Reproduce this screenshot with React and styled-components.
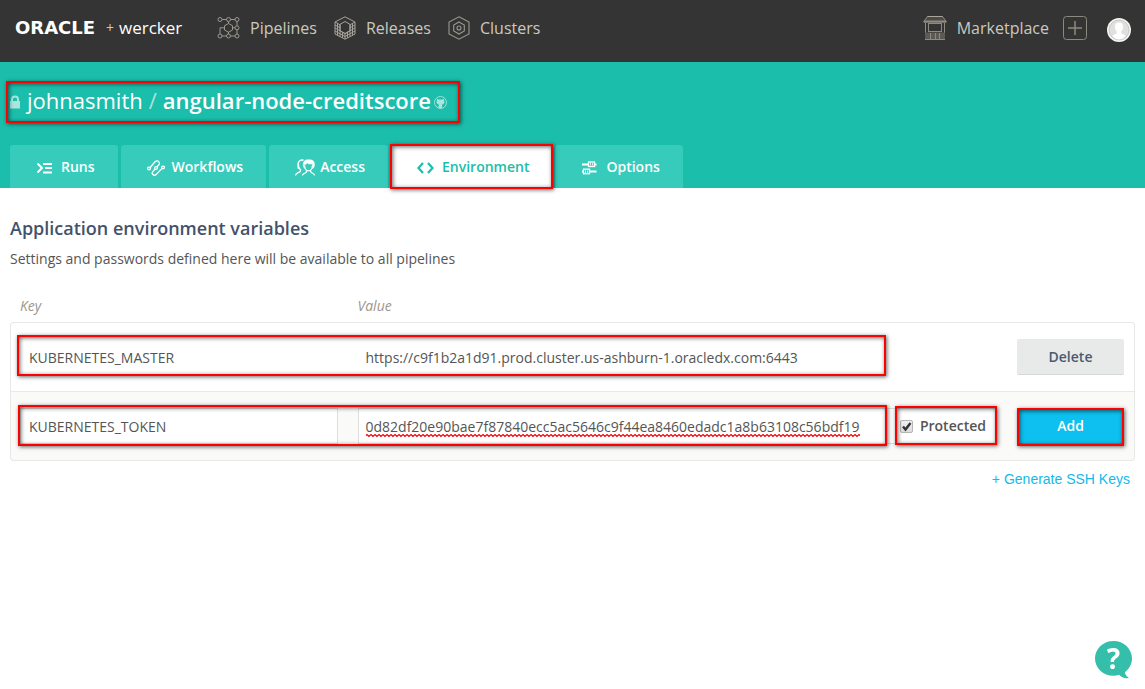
import React, { useState } from "react";
import styled, { createGlobalStyle, css } from "styled-components";

const GlobalStyle = createGlobalStyle`
  *, *::before, *::after { box-sizing: border-box; }
  body {
    margin: 0;
    background: #fff;
    color: #555;
    font-family: "Open Sans", "Noto Sans", sans-serif;
    font-size: 14px;
    line-height: 20px;
  }
  a { color: inherit; text-decoration: none; }
  button, input { font: inherit; color: inherit; }
  svg { display: block; flex: none; }
`;

/* Red call-out frame laid over the part it surrounds */
const Callout = styled.span`
  position: absolute;
  inset: ${(p) => p.$inset};
  border: 2px solid #f00;
  box-shadow: 1px 1px 4px rgba(0, 0, 0, 0.6), inset 1px 1px 4px rgba(0, 0, 0, 0.6);
  pointer-events: none;
  z-index: 2;
`;

const TopBar = styled.header`
  display: flex;
  align-items: center;
  height: 62px;
  padding: 0 14px 6px 15px;
  background: #333433;
  color: #cbc8c1;
  font-size: 16px;
  line-height: 24px;
`;

const Brand = styled.a`
  display: flex;
  align-items: center;
  gap: 5px;
  width: 202px;
  color: #fff;
  font-size: 17px;
`;

const Oracle = styled.span`
  width: 86px;
  font-family: "DejaVu Sans", sans-serif;
  font-weight: 700;
  font-size: 18px;
`;

const Plus = styled.span`
  font-size: 14px;
  color: #cbc8c1;
`;

const Nav = styled.nav`
  display: flex;
  gap: 17px;
`;

const NavLink = styled.a`
  display: flex;
  align-items: center;
  gap: 10px;
`;

const Tools = styled.div`
  display: flex;
  align-items: center;
  gap: 14px;
  margin-left: auto;
`;

const IconButton = styled.button`
  padding: 0;
  border: 0;
  background: none;
  cursor: pointer;
`;

const Account = styled(IconButton)`
  margin: 4px 0 0 6px;
`;

const Banner = styled.section`
  padding: 23px 10px 0;
  background: #1bbdab;
  color: #fff;
`;

const Title = styled.h1`
  position: relative;
  display: flex;
  align-items: center;
  width: fit-content;
  margin: 0 0 30px;
  font-size: 22px;
  line-height: 30px;
  font-weight: 400;
`;

const Owner = styled.a`
  margin-left: 7px;
`;

const Slash = styled.span`
  margin: 0 6px;
  opacity: 0.6;
`;

const Repo = styled.a`
  margin-right: 3px;
  font-weight: 600;
`;

const Tabs = styled.nav`
  display: flex;
  gap: 3px;
`;

const Tab = styled.a`
  position: relative;
  display: flex;
  align-items: center;
  height: 43px;
  padding: 0 23px 0 26px;
  border-radius: 3px 3px 0 0;
  background: #37cbbb;
  font-weight: 600;
  ${(p) => p.$active && css`
    background: #fff;
    color: #1bbdab;
  `}
`;

const TabIcon = styled.span`
  width: 25px;
  padding-top: 2px;
`;

const Main = styled.main`
  padding: 28px 10px;
`;

const Heading = styled.h2`
  margin: 0 0 8px;
  color: #43526a;
  font-size: 18px;
  line-height: 24px;
  font-weight: 600;
`;

const Intro = styled.p`
  margin: 0 0 24px;
  line-height: 22px;
`;

const VariableTable = styled.table`
  width: 100%;
  table-layout: fixed;
  border-collapse: separate;
  border-spacing: 0;
`;

const HeadCell = styled.th`
  width: ${(p) => p.$width || "auto"};
  padding: 0 10px 4px;
  color: #9a978f;
  font-weight: 400;
  font-style: italic;
  line-height: 24px;
  text-align: left;
`;

const Cell = styled.td`
  padding: 16px 10px;
  border-top: 1px solid #e8e8e7;
  vertical-align: middle;
  &:first-child { border-left: 1px solid #e8e8e7; padding-left: 9px; }
  &:last-child { border-right: 1px solid #e8e8e7; }
`;

const Row = styled.tr`
  position: relative;
  background: ${(p) => (p.$draft ? "#fafaf9" : "#fff")};
  &:first-child ${Cell}:first-child { border-top-left-radius: 4px; }
  &:first-child ${Cell}:last-child { border-top-right-radius: 4px; }
  &:last-child ${Cell} { border-bottom: 1px solid #e8e8e7; }
  &:last-child ${Cell}:first-child { border-bottom-left-radius: 4px; }
  &:last-child ${Cell}:last-child { border-bottom-right-radius: 4px; }
`;

const Field = styled.div`
  display: flex;
  align-items: center;
  height: 36px;
  border: 1px solid ${(p) => (p.$plain ? "transparent" : "#dededd")};
  background: #fff;
`;

const TextInput = styled.input`
  flex: 1;
  min-width: 0;
  height: 34px;
  padding: 0 ${(p) => (p.$wide ? "7px" : "8px")};
  border: 0;
  outline: 0;
  background: transparent;
`;

const Marked = styled.span`
  position: relative;
  display: flex;
  flex: 1;
  min-width: 0;
`;

const Squiggle = styled.svg`
  position: absolute;
  left: 7px;
  bottom: 6px;
  height: 3px;
  pointer-events: none;
`;

const Protect = styled.label`
  position: relative;
  display: flex;
  align-items: center;
  gap: 7px;
  height: 34px;
  padding: 0 10px 0 4px;
  font-weight: 600;
`;

const CheckBox = styled.input`
  appearance: none;
  width: 13px;
  height: 13px;
  margin: 0;
  border: 1px solid #b5b5b5;
  border-radius: 2px;
  background: linear-gradient(#f0f0f0, #dcdcdc);
`;

const CheckSlot = styled.span`
  position: relative;
  display: flex;
  svg { position: absolute; inset: 0; pointer-events: none; }
`;

const Button = styled.button`
  position: relative;
  display: block;
  width: 100%;
  height: 36px;
  padding: 0;
  border: 0;
  border-bottom: 1px solid ${(p) => (p.$primary ? "#0aaad8" : "#d5d6d6")};
  border-radius: 2px;
  background: ${(p) => (p.$primary ? "#0dc0ef" : "#e8eaea")};
  color: ${(p) => (p.$primary ? "#fff" : "#4b5a70")};
  font-weight: 600;
  cursor: pointer;
`;

const Footer = styled.div`
  display: flex;
  justify-content: flex-end;
  padding: 8px 5px;
`;

const KeyLink = styled.a`
  color: #14b9ea;
  font-family: "Liberation Sans", Arial, sans-serif;
`;

const Help = styled.button`
  position: fixed;
  right: 13px;
  bottom: 10px;
  width: 37px;
  height: 38px;
  padding: 0;
  border: 0;
  background: none;
  color: #fff;
  font-size: 28px;
  line-height: 34px;
  font-family: "Noto Sans", sans-serif;
  font-weight: 700;
  cursor: pointer;
  svg { position: absolute; inset: 0; }
  span { position: relative; display: block; height: 38px; }
`;

const PipelinesIcon = () => (
  <svg width="23" height="24" viewBox="0 0 23 24" fill="none" stroke="#9b9890" strokeWidth="1">
    <circle cx="3" cy="3.5" r="2" /><circle cx="11.5" cy="3.5" r="2" /><circle cx="20" cy="3.5" r="2" />
    <circle cx="3" cy="20" r="2" /><circle cx="11.5" cy="20" r="2" /><circle cx="20" cy="20" r="2" />
    <circle cx="20" cy="11.8" r="2" />
    <path d="M5 3.5h4.5M13.5 3.5H18M5 20h4.5M13.5 20H18M20 5.5v4.3M20 13.8V18M11.5 5.5v2M11.5 16v2M3 18v-6.2h4M16 11.8h2" />
    <path d="M11.5 7.5l4 2.2v4.3l-4 2.2-4-2.2V9.7z" />
  </svg>
);

const ReleasesIcon = () => (
  <svg width="22" height="24" viewBox="0 0 22 24" fill="none" stroke="#a5a29a" strokeWidth="1">
    <path d="M11 .8l10 5.2v12l-10 5.200L1 18V6z" />
    <path d="M11 5.500l5 2.800v6.500l-5 2.800-5-2.800V8.300z" />
    <path d="M1 6l5 2.800M21 6l-5 2.800M1 9l5 2.800M21 9l-5 2.800M1 12l10 5.600L21 12M1 15l10 5.500L21 15" />
    <path d="M3.500 7.400v12M6 8.800v12M8.500 16.200v5.600M11 17.600v5.400M13.500 16.200v5.600M16 8.800v12M18.500 7.400v12" />
  </svg>
);

const ClustersIcon = () => (
  <svg width="22" height="24" viewBox="0 0 22 24" fill="none" stroke="#9b9890" strokeWidth="1.1">
    <path d="M11 .8l10 5.3v11.8l-10 5.3-10-5.3V6.1z" />
    <path d="M11 6l5.3 3v6L11 18l-5.3-3V9z" />
    <circle cx="11" cy="12" r="2" />
  </svg>
);

const MarketIcon = () => (
  <svg width="24" height="26" viewBox="0 0 24 26" fill="none" stroke="#8f8a81" strokeWidth="1">
    <path d="M4.500 1.500h15l4 5.500H.5z" fill="#4c4a46" />
    <path d="M4.500 1.500h15" stroke="#aaa69d" />
    <path d="M1 6.500h22" strokeWidth="2" />
    <path d="M2.500 8v17M5.500 8v9M18.500 8v9M21.500 8v17" />
    <path d="M5.500 8.500h13M5.500 16.500h13" />
    <path d="M2 17.500h20v7H2z" fill="#5d5a54" stroke="none" />
    <path d="M2 24.500h20M7.500 18v7M12.500 18v7M16.500 18v7" />
  </svg>
);

const AddIcon = () => (
  <svg width="24" height="24" viewBox="0 0 24 24" fill="none" stroke="#8d897f">
    <rect x=".5" y=".5" width="23" height="23" rx="3" />
    <path d="M5 12h14M12 5v14" strokeWidth="1.5" />
  </svg>
);

const AvatarIcon = () => (
  <svg width="24" height="24" viewBox="0 0 24 24">
    <circle cx="12" cy="12" r="12" fill="#f4f4f3" />
    <circle cx="12" cy="12" r="10" fill="#e0e0dd" stroke="#b9b9b6" strokeWidth=".7" />
    <path d="M12 4.500c2.800 0 4.300 2 4.100 4.700-.1 1.800-.8 3.200-1.800 4.100v2.200c1.500.8 3.500 1.200 4.400 2.700A9.500 9.500 0 0 1 12 21.500a9.500 9.500 0 0 1-6.700-3.300c.9-1.500 2.900-1.900 4.400-2.700v-2.200c-1-.9-1.700-2.300-1.800-4.100C7.700 6.500 9.200 4.500 12 4.500z" fill="#fff" />
  </svg>
);

const LockIcon = () => (
  <svg width="10" height="18" viewBox="0 -4 10 18" fill="#a8e5dd">
    <path d="M0 6h1V4.500a4 4 0 0 1 8 0V6h1v7.500H0zM3 6h4V4.500a2 2 0 0 0-4 0z" />
  </svg>
);

const GithubIcon = () => (
  <svg width="13" height="17" viewBox="0 -4 13 17">
    <circle cx="6.500" cy="6.500" r="6" fill="none" stroke="#a8e5dd" strokeWidth=".9" />
    <path d="M3.200 2.800l1.500.8c1.100-.3 2.500-.3 3.600 0l1.500-.8c.3.600.3 1.200.2 1.700.9 1.500.5 3.800-2.200 4.200.3.400.3.900.3 1.500v2H4.900v-1.400c-1 .1-1.500-.2-1.900-1 .7.100 1 .4 1.900.2 0-.5.100-.9.300-1.300C2.500 8.300 2.100 6 3 4.500c-.1-.5-.1-1.100.2-1.700z" fill="#a8e5dd" />
  </svg>
);

const RunsIcon = () => (
  <svg width="17" height="12" viewBox="-1 0 17 12" fill="none" stroke="#fff" strokeWidth="2">
    <path d="M.5 1.500L5 6 .5 10.500M6 2h9M8 6h7M6 10.500h9" />
  </svg>
);

const WorkflowsIcon = () => (
  <svg width="18" height="16" viewBox="0 0 18 16" fill="none" stroke="#fff" strokeWidth="1.300">
    <circle cx="2" cy="8.500" r="1.400" /><circle cx="9" cy="8" r="1.400" /><circle cx="16" cy="7.500" r="1.400" />
    <path d="M3.200 7.500l4.800-5.700c1.200-1.200 3-1.100 3.900 0 .8 1 .6 2.200-.1 3.100L9.900 7M8.100 9l-2.300 2.600c-.8 1-.8 2.200.1 3 1 .9 2.400.8 3.500-.3l5.400-5.700" />
  </svg>
);

const AccessIcon = () => (
  <svg width="20" height="17" viewBox="0 0 20 17" fill="none" stroke="#fff" strokeWidth="1.200">
    <path d="M8.300 5.500C8.200 2.500 9.800.8 12.300.8h3.200c2.600.1 4 1.900 4 4.700-.1 2.300-.9 3.300-1.900 4.300.2-2.300.1-3.800-.5-5-1.700.5-3.700.3-4.900-.8-.8 1-1.700 1.600-3.100 1.900-.2 1.300 0 2.500.4 3.600-.8-1.200-1.200-2.500-1.200-4z" fill="#fff" strokeWidth=".5" />
    <path d="M9.600 6.500c.3 3.300 1.800 5.400 3.900 5.400s3.700-2.100 3.900-5.400" />
    <path d="M11.700 11.500c.1 2-.8 2.600-3.200 3.300-.6.300-.9.800-1 1.700M15.400 11.500c.1 2 .6 2.400 3 3.200.7.300 1 .9 1.100 1.800" />
    <path d="M8.500 1.300C6 .5 3.200 2 3.100 5c0 2.500.5 3.500-.2 4.700" strokeWidth="1.500" />
    <path d="M3.500 5.500c-.2 2.500.7 4.500 2.200 5.500.1 1.500-.7 2-2.600 2.600C1.700 14.100.8 14.700.6 16.500" />
  </svg>
);

const CodeIcon = () => (
  <svg width="18" height="12" viewBox="1 0 18 12" fill="none" stroke="#1bbdab" strokeWidth="2.200">
    <path d="M7 1L2.500 6 7 11M12 1l4.500 5L12 11" />
  </svg>
);

const OptionsIcon = () => (
  <svg width="16" height="14" viewBox="0 0 16 14" fill="none" stroke="#fff" strokeWidth="1.300">
    <path d="M1 3.500h6M14 3.500h1.500M1 10.500h1.500M9 10.500h6.500" strokeWidth="2" />
    <rect x="7.500" y="1" width="6" height="4.500" /><rect x="2.500" y="8.200" width="6" height="4.500" />
    <path d="M9.500 2v2.500M11.500 2v2.500M4.500 9.500V12M6.500 9.500V12" strokeWidth=".8" />
  </svg>
);

const CheckMark = () => (
  <svg width="13" height="13" viewBox="0 0 13 13" fill="none" stroke="#333" strokeWidth="2.400">
    <path d="M3 6.500l2.500 3L10.500 3" />
  </svg>
);

const BubbleIcon = () => (
  <svg width="37" height="38" viewBox="0 0 37 38" fill="#35bfaa">
    <path d="M18.500 0C28.700 0 37 7.800 37 17.500c0 5.700-2.800 10.600-7.200 13.800.5 2.600 1.800 4.400 4.200 5.600-3.800.8-7.600-.3-9.800-3.100-1.800.7-3.700 1-5.700 1C8.300 34.800 0 27.200 0 17.500S8.300 0 18.500 0z" />
  </svg>
);

const Wave = () => (
  <Squiggle width="494" aria-hidden="true">
    <defs>
      <pattern id="wave" width="4" height="3" patternUnits="userSpaceOnUse">
        <path d="M-1 3l2-2 2 2 2-2" transform="translate(0 -.5)" fill="none" stroke="#f00" strokeWidth="1.200" />
      </pattern>
    </defs>
    <rect width="100%" height="3" fill="url(#wave)" />
  </Squiggle>
);

const sections = [
  { label: "Pipelines", Icon: PipelinesIcon },
  { label: "Releases", Icon: ReleasesIcon },
  { label: "Clusters", Icon: ClustersIcon },
];

const tabs = [
  { label: "Runs", Icon: RunsIcon },
  { label: "Workflows", Icon: WorkflowsIcon },
  { label: "Access", Icon: AccessIcon },
  { label: "Environment", Icon: CodeIcon, active: true },
  { label: "Options", Icon: OptionsIcon },
];

export default function App() {
  const [saved, setSaved] = useState({
    key: "KUBERNETES_MASTER",
    value: "https://c9f1b2a1d91.prod.cluster.us-ashburn-1.oracledx.com:6443",
  });
  const [draft, setDraft] = useState({
    key: "KUBERNETES_TOKEN",
    value: "0d82df20e90bae7f87840ecc5ac5646c9f44ea8460edadc1a8b63108c56bdf19",
  });
  const [isProtected, setProtected] = useState(true);

  return (
    <>
      <GlobalStyle />
      <TopBar>
        <Brand href="#">
          <Oracle>ORACLE</Oracle>
          <Plus>+</Plus>
          <span>wercker</span>
        </Brand>
        <Nav aria-label="Main">
          {sections.map(({ label, Icon }) => (
            <NavLink href="#" key={label}><Icon />{label}</NavLink>
          ))}
        </Nav>
        <Tools>
          <NavLink href="#"><MarketIcon />Marketplace</NavLink>
          <IconButton type="button" aria-label="Create"><AddIcon /></IconButton>
          <Account type="button" aria-label="Account"><AvatarIcon /></Account>
        </Tools>
      </TopBar>

      <Banner>
        <Title>
          <LockIcon />
          <Owner href="#">johnasmith</Owner>
          <Slash>/</Slash>
          <Repo href="#">angular-node-creditscore</Repo>
          <GithubIcon />
          <Callout $inset="-4px -13px -8px -4px" />
        </Title>
        <Tabs aria-label="Application">
          {tabs.map(({ label, Icon, active }) => (
            <Tab href="#" key={label} $active={active} aria-current={active ? "page" : undefined}>
              <TabIcon><Icon /></TabIcon>
              {label}
              {active && <Callout $inset="-1px" />}
            </Tab>
          ))}
        </Tabs>
      </Banner>

      <Main>
        <Heading>Application environment variables</Heading>
        <Intro>Settings and passwords defined here will be available to all pipelines</Intro>
        <VariableTable>
          <thead>
            <tr>
              <HeadCell $width="30%" scope="col">Key</HeadCell>
              <HeadCell scope="col">Value</HeadCell>
              <HeadCell $width="128px" aria-label="Actions" />
            </tr>
          </thead>
          <tbody>
            <Row>
              <Cell>
                <Field $plain>
                  <TextInput aria-label="Key" spellCheck={false} value={saved.key}
                    onChange={(e) => setSaved({ ...saved, key: e.target.value })} />
                </Field>
                <Callout $inset="13px 249px 15px 7px" />
              </Cell>
              <Cell>
                <Field $plain>
                  <TextInput $wide aria-label="Value" spellCheck={false} value={saved.value}
                    onChange={(e) => setSaved({ ...saved, value: e.target.value })} />
                </Field>
              </Cell>
              <Cell><Button type="button">Delete</Button></Cell>
            </Row>
            <Row $draft>
              <Cell>
                <Field>
                  <TextInput aria-label="New key" spellCheck={false} value={draft.key}
                    onChange={(e) => setDraft({ ...draft, key: e.target.value })} />
                </Field>
                <Callout $inset="14px 248px 15px 8px" />
              </Cell>
              <Cell>
                <Field>
                  <Marked>
                    <TextInput $wide aria-label="New value" spellCheck={false} value={draft.value}
                      onChange={(e) => setDraft({ ...draft, value: e.target.value })} />
                    <Wave />
                  </Marked>
                  <Protect>
                    <CheckSlot>
                      <CheckBox type="checkbox" checked={isProtected}
                        onChange={(e) => setProtected(e.target.checked)} />
                      {isProtected && <CheckMark />}
                    </CheckSlot>
                    Protected
                    <Callout $inset="-3px -1px -2px" />
                  </Protect>
                </Field>
              </Cell>
              <Cell>
                <Button type="button" $primary>Add<Callout $inset="0 0 -3px 0" /></Button>
              </Cell>
            </Row>
          </tbody>
        </VariableTable>
        <Footer><KeyLink href="#">+ Generate SSH Keys</KeyLink></Footer>
      </Main>

      <Help type="button" aria-label="Help">
        <BubbleIcon />
        <span aria-hidden="true">?</span>
      </Help>
    </>
  );
}
